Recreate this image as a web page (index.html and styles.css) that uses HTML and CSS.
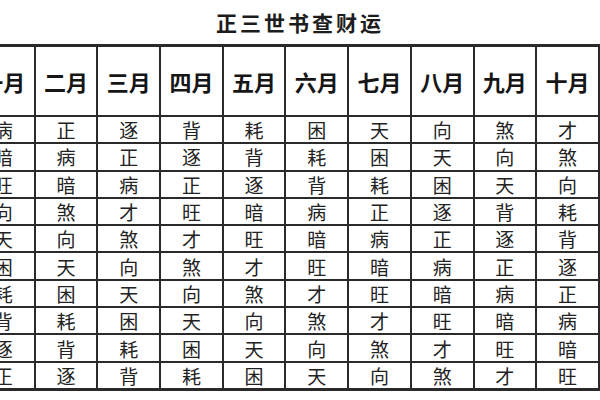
FILE: index.html
```html
<!DOCTYPE html>
<html lang="zh">
<head>
<meta charset="utf-8">
<link rel="stylesheet" href="styles.css">
</head>
<body>
<div class="page">
  <h1 class="title">正三世书查财运</h1>
  <div class="sheet">
    <table class="grid">
      <thead>
        <tr><th>一月</th><th>二月</th><th>三月</th><th>四月</th><th>五月</th><th>六月</th><th>七月</th><th>八月</th><th>九月</th><th>十月</th></tr>
      </thead>
      <tbody>
        <tr><td>病</td><td>正</td><td>逐</td><td>背</td><td>耗</td><td>困</td><td>天</td><td>向</td><td>煞</td><td>才</td></tr>
        <tr><td>暗</td><td>病</td><td>正</td><td>逐</td><td>背</td><td>耗</td><td>困</td><td>天</td><td>向</td><td>煞</td></tr>
        <tr><td>旺</td><td>暗</td><td>病</td><td>正</td><td>逐</td><td>背</td><td>耗</td><td>困</td><td>天</td><td>向</td></tr>
        <tr><td>向</td><td>煞</td><td>才</td><td>旺</td><td>暗</td><td>病</td><td>正</td><td>逐</td><td>背</td><td>耗</td></tr>
        <tr><td>天</td><td>向</td><td>煞</td><td>才</td><td>旺</td><td>暗</td><td>病</td><td>正</td><td>逐</td><td>背</td></tr>
        <tr><td>困</td><td>天</td><td>向</td><td>煞</td><td>才</td><td>旺</td><td>暗</td><td>病</td><td>正</td><td>逐</td></tr>
        <tr><td>耗</td><td>困</td><td>天</td><td>向</td><td>煞</td><td>才</td><td>旺</td><td>暗</td><td>病</td><td>正</td></tr>
        <tr><td>背</td><td>耗</td><td>困</td><td>天</td><td>向</td><td>煞</td><td>才</td><td>旺</td><td>暗</td><td>病</td></tr>
        <tr><td>逐</td><td>背</td><td>耗</td><td>困</td><td>天</td><td>向</td><td>煞</td><td>才</td><td>旺</td><td>暗</td></tr>
        <tr><td>正</td><td>逐</td><td>背</td><td>耗</td><td>困</td><td>天</td><td>向</td><td>煞</td><td>才</td><td>旺</td></tr>
      </tbody>
    </table>
  </div>
</div>
</body>
</html>
```
FILE: styles.css
```css
html, body {
  margin: 0;
  padding: 0;
  background: #fff;
}
body {
  width: 600px;
  height: 400px;
  overflow: hidden;
  font-family: "Noto Sans CJK SC", "Noto Sans CJK JP", sans-serif;
  color: #1a1a1a;
}
.page {
  display: flex;
  flex-direction: column;
}
.title {
  margin: 0;
  height: 44px;
  display: flex;
  align-items: center;
  justify-content: center;
  font-size: 21px;
  font-weight: 700;
  letter-spacing: 3px;
  line-height: 1;
  color: #1c1c1c;
}
.sheet {
  overflow: hidden;
  width: 600px;
}
.grid {
  margin-left: -29px;
  border-collapse: collapse;
  table-layout: fixed;
}
.grid th,
.grid td {
  width: 61px;
  border: 2px solid #2a2a2a;
  text-align: center;
  padding: 0;
}
.grid th {
  height: 68px;
  font-size: 22px;
  font-weight: 700;
  color: #161616;
}
.grid td {
  height: 25.3px;
  font-size: 19px;
  font-weight: 400;
  line-height: 1;
  color: #222;
}
.grid thead th {
  border-top-width: 3px;
}
.grid tbody tr:last-child td {
  border-bottom-width: 3px;
}
```
